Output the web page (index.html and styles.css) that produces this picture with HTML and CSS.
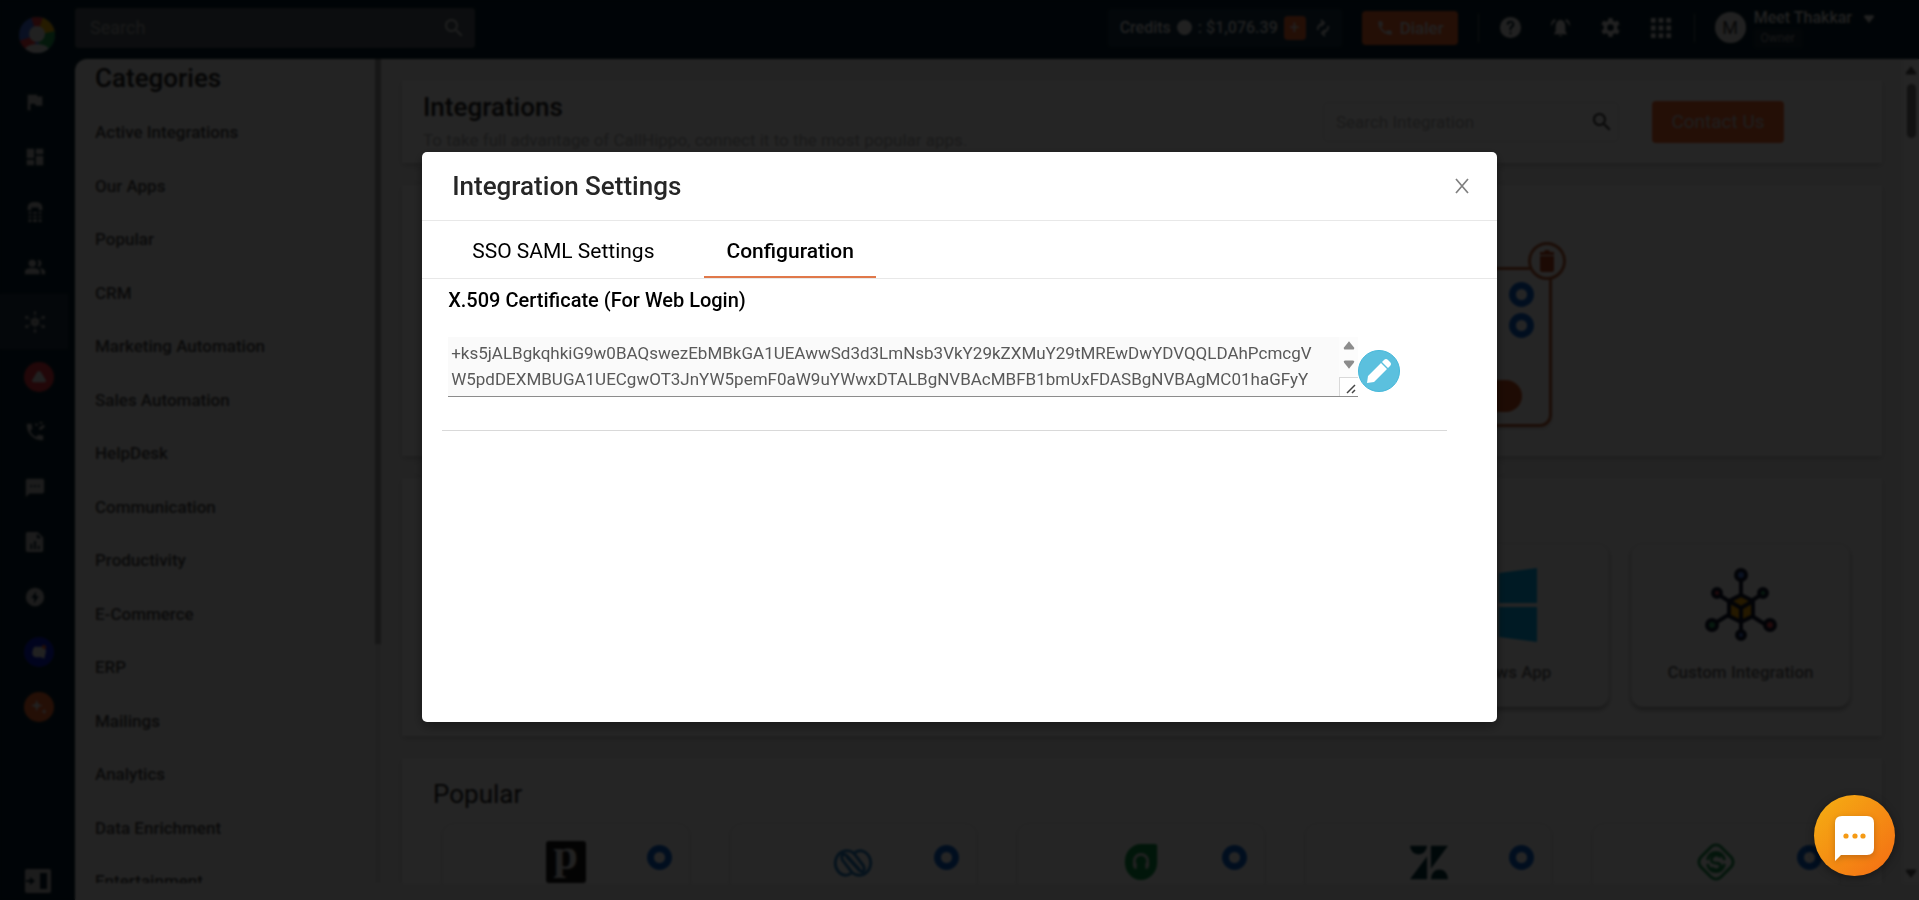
FILE: index.html
```html
<!DOCTYPE html>
<html lang="en">

<head>
    <meta charset="UTF-8">
    <meta name="viewport" content="width=device-width, initial-scale=1.0">
    <title>Integrations</title>
    <link rel="stylesheet" href="styles.css">
</head>

<body>
    <!-- shared icons -->
    <svg class="sprite" aria-hidden="true">
        <symbol id="i-search" viewBox="0 0 24 24"><path d="M15.5 14h-.8l-.3-.3A6.5 6.5 0 1 0 13.7 14.4l.3.3v.8l5 5 1.5-1.5zm-6 0a4.5 4.5 0 1 1 0-9 4.5 4.5 0 0 1 0 9z"/></symbol>
        <symbol id="i-phone" viewBox="0 0 24 24"><path d="M6.6 10.8a15 15 0 0 0 6.6 6.6l2.2-2.2c.3-.3.7-.4 1-.2 1.1.4 2.3.6 3.6.6.6 0 1 .4 1 1V20c0 .6-.4 1-1 1A17 17 0 0 1 3 4c0-.6.4-1 1-1h3.500c.6 0 1 .4 1 1 0 1.300.2 2.500.6 3.600.1.300 0 .7-.2 1z"/></symbol>
        <symbol id="i-up" viewBox="0 0 10 8"><path d="M5 0l4 5q1 2-1 2H2Q0 7 1 5z"/></symbol>
        <symbol id="i-down" viewBox="0 0 10 8"><path d="M5 8L1 3Q0 1 2 1h6q2 0 1 2z"/></symbol>
    </svg>

    <div class="app">
        <nav class="rail" aria-label="Main">
            <a class="logo" href="#" aria-label="Home">
                <svg width="36" height="36" viewBox="0 0 36 36">
                    <defs><clipPath id="round"><circle cx="18" cy="18" r="18"/></clipPath></defs>
                    <g clip-path="url(#round)">
                        <rect width="36" height="36" fill="#3f6be0"/>
                        <path d="M18 18L12 0h14z" fill="#e8353c"/>
                        <path d="M18 18L24 0h12v16z" fill="#f5b400"/>
                        <path d="M18 18l18-4v22H22z" fill="#1b9e4b"/>
                        <path d="M18 18L0 24v12h14z" fill="#e8353c"/>
                        <circle cx="18" cy="17" r="8" fill="#ddd"/>
                        <ellipse cx="18" cy="33" rx="12" ry="6" fill="#ddd"/>
                    </g>
                </svg>
            </a>
            <a class="rail-item" href="#" aria-label="Setup"><svg viewBox="0 0 24 24"><path d="M4 4h10l1 2h5v10h-7l-1-2H7v7H4z"/></svg></a>
            <a class="rail-item" href="#" aria-label="Dashboard"><svg viewBox="0 0 24 24"><path d="M3 3h8v10H3zM13 3h8v6h-8zM13 11h8v10h-8zM3 15h8v6H3z"/></svg></a>
            <a class="rail-item" href="#" aria-label="Numbers"><svg viewBox="0 0 24 24"><path d="M4 7q0-6 8-6t8 6v3h-4V7H8v3H4zM5 12h3v2H5zm5 0h4v2h-4zm6 0h3v2h-3zM5 16h3v2H5zm5 0h4v2h-4zm6 0h3v2h-3zM5 20h3v3H5zm5 0h4v3h-4zm6 0h3v3h-3z"/></svg></a>
            <a class="rail-item" href="#" aria-label="Users"><svg viewBox="0 0 24 24"><circle cx="9" cy="8" r="4"/><path d="M1 20v-3q0-4 8-4t8 4v3zM15 4a4 4 0 1 1 0 8q2-4 0-8zM17 13q6 1 6 4v3h-4v-3q0-2-2-4z"/></svg></a>
            <a class="rail-item active" href="#" aria-label="Integrations"><svg viewBox="0 0 24 24"><circle cx="12" cy="12" r="4.500"/><circle cx="12" cy="2" r="1.500"/><circle cx="12" cy="22" r="1.500"/><circle cx="3" cy="7" r="1.800"/><circle cx="21" cy="7" r="1.800"/><circle cx="3" cy="17" r="1.800"/><circle cx="21" cy="17" r="1.800"/><path d="M12 2v20M3 7l18 10M21 7L3 17" stroke="#888"/></svg></a>
            <a class="rail-item disc red" href="#" aria-label="Alerts"><svg viewBox="0 0 24 24"><path d="M12 4q2 0 3 2l6 10q1 3-2 3H5q-3 0-2-3L9 6q1-2 3-2z"/></svg></a>
            <a class="rail-item" href="#" aria-label="Power dialer"><svg viewBox="0 0 24 24"><use href="#i-phone"/><path d="M12 3h3v2h-3zM16 8l5-4 2 2-5 4zM17 1h3v2h-3z"/></svg></a>
            <a class="rail-item" href="#" aria-label="Messages"><svg viewBox="0 0 24 24"><path fill-rule="evenodd" d="M4 3h16q2 0 2 2v12q0 2-2 2H6l-4 4V5q0-2 2-2zm3 7v2h2v-2zm4 0v2h2v-2zm4 0v2h2v-2z"/></svg></a>
            <a class="rail-item" href="#" aria-label="Reports"><svg viewBox="0 0 24 24"><path fill-rule="evenodd" d="M4 1h11l6 6v14q0 2-2 2H4q-2 0-2-2V3q0-2 2-2zm10 2v5h5zM7 14v6h2v-6zm4-3v9h2v-9zm4 5v4h2v-4z"/></svg></a>
            <a class="rail-item" href="#" aria-label="Activity"><svg viewBox="0 0 24 24"><path fill-rule="evenodd" d="M12 2a10 10 0 1 0 0 20 10 10 0 0 0 0-20zm1 4v5h3l-5 8v-6H8z"/></svg></a>
            <a class="rail-item disc blue" href="#" aria-label="Inbox"><svg viewBox="0 0 24 24"><path d="M6 5h12q4 3 3 8-1 3-2 8l-4-2H8q-5-1-5-6 0-5 3-8z"/><circle cx="19" cy="5" r="3" fill="#f0642c"/></svg></a>
            <a class="rail-item disc orange" href="#" aria-label="AI"><svg viewBox="0 0 24 24"><path d="M9 2l2 6 6 2-6 2-2 6-2-6-6-2 6-2zM19 14l1 3 3 1-3 1-1 4-1-4-3-1 3-1z"/></svg></a>
            <button class="expand" type="button" aria-label="Expand menu">
                <svg width="26" height="24" viewBox="0 0 26 24"><path fill-rule="evenodd" d="M2 0h22q2 0 2 2v20q0 2-2 2H2q-2 0-2-2V2q0-2 2-2zm13 4v16h7V4zM5 8v3H1v2h4v3l5-4z"/></svg>
            </button>
        </nav>

        <div class="main">
            <header class="topbar">
                <div class="top-search">
                    <input type="text" placeholder="Search" aria-label="Search">
                    <svg width="24" height="24"><use href="#i-search"/></svg>
                </div>
                <div class="credits">
                    <span>Credits</span>
                    <span class="info"></span>
                    <span>: $1,076.39</span>
                    <button class="plus" type="button">+</button>
                    <svg width="14" height="18" viewBox="0 0 14 18" fill="none" stroke="#ccc" stroke-width="2"><path d="M2 11q-1-4 5-7M5 1l3 3-3 3M12 7q1 4-5 7M9 17l-3-3 3-3"/></svg>
                </div>
                <button class="dialer" type="button"><svg width="18" height="18"><use href="#i-phone"/></svg>Dialer</button>
                <span class="bar"></span>
                <div class="tools">
                    <svg viewBox="0 0 24 24"><path fill-rule="evenodd" d="M12 1a11 11 0 1 0 0 22 11 11 0 0 0 0-22zM8 9q0-4 4-4t4 4q0 2-2 3l-1 1v2h-2v-3l2-2q1-1 1-2-2-3-4 1zm3 8h2v2h-2z"/></svg>
                    <svg viewBox="0 0 24 24"><path d="M12 4q5 1 5 7v5l2 3H5l2-3v-5q0-6 5-7zM10 20h4q-2 3-4 0zM6 3l1 2q-3 2-4 5H2q0-5 4-7zM18 3l-1 2q3 2 4 5h1q0-5-4-7z"/></svg>
                    <svg viewBox="0 0 24 24"><path fill-rule="evenodd" d="M10 2h4l.5 3 2 1 3-1 2 3.500-2.500 2v3l2.500 2-2 3.500-3-1-2 1-.5 3h-4l-.5-3-2-1-3 1-2-3.500 2.500-2v-3l-2.500-2 2-3.500 3 1 2-1zM12 8.500a3.500 3.500 0 1 0 0 7 3.500 3.500 0 0 0 0-7z"/></svg>
                    <svg viewBox="0 0 24 24"><path d="M2 2h5v5H2zm8 0h5v5h-5zm8 0h5v5h-5zM2 10h5v5H2zm8 0h5v5h-5zm8 0h5v5h-5zM2 18h5v5H2zm8 0h5v5h-5zm8 0h5v5h-5z"/></svg>
                </div>
                <span class="bar"></span>
                <span class="avatar">M</span>
                <div class="user">
                    <div class="user-name">Meet Thakkar <svg width="12" height="9"><use href="#i-down"/></svg></div>
                    <span class="role">Owner</span>
                </div>
            </header>

            <div class="body">
                <aside class="categories">
                    <h2>Categories</h2>
                    <ul>
                        <li><a href="#">Active Integrations</a></li>
                        <li><a href="#">Our Apps</a></li>
                        <li><a href="#">Popular</a></li>
                        <li><a href="#">CRM</a></li>
                        <li><a href="#">Marketing Automation</a></li>
                        <li><a href="#">Sales Automation</a></li>
                        <li><a href="#">HelpDesk</a></li>
                        <li><a href="#">Communication</a></li>
                        <li><a href="#">Productivity</a></li>
                        <li><a href="#">E-Commerce</a></li>
                        <li><a href="#">ERP</a></li>
                        <li><a href="#">Mailings</a></li>
                        <li><a href="#">Analytics</a></li>
                        <li><a href="#">Data Enrichment</a></li>
                        <li><a href="#">Entertainment</a></li>
                    </ul>
                </aside>
                <div class="side-scroll"><div class="side-thumb"></div></div>

                <main class="content">
                    <section class="panel intro">
                        <div class="intro-text">
                            <h1>Integrations</h1>
                            <p>To take full advantage of CallHippo, connect it to the most popular apps.</p>
                        </div>
                        <div class="find">
                            <input type="text" placeholder="Search Integration" aria-label="Search Integration">
                            <svg width="24" height="24"><use href="#i-search"/></svg>
                        </div>
                        <button class="contact" type="button">Contact Us</button>
                    </section>

                    <section class="panel active-apps">
                        <div class="cards">
                            <div class="card connected">
                                <span class="dot"></span>
                                <span class="dot"></span>
                                <span class="pill"></span>
                                <button class="trash" type="button" aria-label="Remove">
                                    <svg width="16" height="22" viewBox="0 0 16 22"><path d="M1 2h4l1-2h4l1 2h4v3H1zM1 6h14v14q0 2-2 2H3q-2 0-2-2z"/></svg>
                                </button>
                            </div>
                        </div>
                    </section>

                    <section class="panel our-apps">
                        <div class="app-card windows">
                            <svg width="74" height="74" viewBox="0 0 74 74" fill="#00adef"><path d="M0 11l32-5v29H0zM36 5l38-5v35H36zM0 39h32v29L0 63zM36 39h38v35l-38-5z"/></svg>
                            <span>Windows App</span>
                        </div>
                        <div class="app-card">
                            <svg width="74" height="74" viewBox="0 0 74 74" stroke="#10172e" stroke-width="4">
                                <path d="M37 8v58M12 25l50 32M60 25L8 57" fill="none"/>
                                <path d="M37 27l12 6v15l-12 6-12-6V33z" fill="#f5a500"/>
                                <path d="M25 33l12 7 12-7M37 40v14" fill="none"/>
                                <circle cx="37" cy="7" r="5" fill="#4a7de8"/>
                                <circle cx="13" cy="25" r="4" fill="#e8454e"/>
                                <circle cx="59" cy="25" r="4" fill="#2fa866"/>
                                <circle cx="8" cy="57" r="5" fill="#2fa866"/>
                                <circle cx="66" cy="57" r="5" fill="#e8454e"/>
                                <circle cx="37" cy="67" r="4" fill="#4a7de8"/>
                            </svg>
                            <span>Custom Integration</span>
                        </div>
                    </section>

                    <section class="panel popular">
                        <h2>Popular</h2>
                        <div class="cards">
                            <div class="card">
                                <span class="brand pd">p</span>
                                <span class="dot"></span>
                            </div>
                            <div class="card">
                                <svg class="brand" viewBox="0 0 42 42" fill="none" stroke="#1b75bb" stroke-width="3"><path d="M19 33q-3 2-6 2a12 13 0 1 1 9-23l10 13q2 5-1 6-3 0-5-3L14 15"/><path d="M23 11q3-2 6-2a12 13 0 1 1-9 23L10 19q-2-5 1-6 3 0 5 3l12 13"/></svg>
                                <span class="dot"></span>
                            </div>
                            <div class="card">
                                <svg class="brand" viewBox="0 0 42 42"><path d="M21 2h15q2 0 2 2v18A17 19 0 1 1 21 2z" fill="#0b9444"/><path d="M14 26v-6a7 7 0 0 1 14 0v6M15 22v6M27 22v6" fill="none" stroke="#ddd" stroke-width="3"/></svg>
                                <span class="dot"></span>
                            </div>
                            <div class="card">
                                <svg class="brand" viewBox="0 0 42 42" fill="#03363d"><path d="M1 4h18q-1 9-9 9T1 4zM19 15v24H1zM23 4h18L23 28zM23 39q1-10 9-10t9 10z"/></svg>
                                <span class="dot"></span>
                            </div>
                            <div class="card">
                                <svg class="brand" viewBox="0 0 42 42" fill="none" stroke="#17904a" stroke-width="3"><path d="M21 3q3 0 5 2l11 11q4 5 0 10L26 37q-5 4-10 0L5 26q-4-5 0-10L16 5q2-2 5-2z"/><path d="M26 16q-5-5-9 0-3 5 3 6 6 0 6 4-3 6-10 1M12 19q2-8 9-8t9 8M12 23q2 8 9 8t9-8"/></svg>
                                <span class="dot"></span>
                            </div>
                        </div>
                    </section>
                </main>

                <div class="page-scroll">
                    <svg width="12" height="10"><use href="#i-up"/></svg>
                    <div class="page-thumb"></div>
                    <svg class="end" width="12" height="10"><use href="#i-down"/></svg>
                </div>
            </div>
        </div>
    </div>

    <div class="overlay">
        <div class="modal" role="dialog" aria-labelledby="modal-title">
            <div class="modal-header">
                <h2 id="modal-title">Integration Settings</h2>
                <button class="close" type="button" aria-label="Close">
                    <svg width="14" height="16" viewBox="0 0 14 16"><path d="M1 1l12 14M13 1L1 15" stroke="#808080" stroke-width="1.700" fill="none"/></svg>
                </button>
            </div>
            <div class="tabs">
                <button class="tab" type="button">SSO SAML Settings</button>
                <button class="tab selected" type="button">Configuration</button>
            </div>
            <div class="modal-body">
                <label for="cert">X.509 Certificate (For Web Login)</label>
                <div class="cert-row">
                    <div class="cert-box">
                        <textarea id="cert" rows="2" readonly>+ks5jALBgkqhkiG9w0BAQswezEbMBkGA1UEAwwSd3d3LmNsb3VkY29kZXMuY29tMREwDwYDVQQLDAhPcmcgV
W5pdDEXMBUGA1UECgwOT3JnYW5pemF0aW9uYWwxDTALBgNVBAcMBFB1bmUxFDASBgNVBAgMC01haGFyY</textarea>
                        <div class="cert-scroll">
                            <svg width="12" height="10"><use href="#i-up"/></svg>
                            <svg width="12" height="10"><use href="#i-down"/></svg>
                            <div class="grip"><svg width="10" height="10" viewBox="0 0 10 10"><path d="M1 9l8-8M6 9l3-3" stroke="#444" stroke-width="1.500"/></svg></div>
                        </div>
                    </div>
                    <button class="edit" type="button" aria-label="Edit">
                        <svg width="24" height="24" viewBox="0 0 24 24"><path d="M0 24l1-7L14 4l6 6L7 23zM15 3l2-2q2-2 4 0l2 2q2 2 0 4l-2 2z" fill="#fff"/></svg>
                    </button>
                </div>
            </div>
        </div>
    </div>

    <button class="chat" type="button" aria-label="Chat">
        <svg width="40" height="46" viewBox="0 0 40 46"><path d="M7 0h25q7 0 7 7v25q0 7-7 7H6l-6 6V7q0-7 7-7z" fill="#fff"/><g fill="#f59a14"><circle cx="11" cy="20" r="2.600"/><circle cx="20" cy="20" r="2.600"/><circle cx="28" cy="20" r="2.600"/></g></svg>
    </button>
</body>

</html>
```
FILE: styles.css
```css
* {
    box-sizing: border-box;
}

body {
    margin: 0;
    font-family: Roboto, Arial, sans-serif;
    font-size: 18px;
    color: #222;
    background: #06202e;
    overflow: hidden;
}

h1,
h2,
p,
ul {
    margin: 0;
    padding: 0;
}

button,
input,
textarea {
    font-family: inherit;
    border: none;
    padding: 0;
    margin: 0;
}

a {
    color: inherit;
    text-decoration: none;
}

.sprite {
    display: none;
}

.app {
    display: flex;
    height: 100vh;
}

/* left rail */
.rail {
    width: 75px;
    display: flex;
    flex-direction: column;
    flex-shrink: 0;
}

.logo {
    padding: 17px 0 0 19px;
    height: 74px;
}

.rail-item {
    display: flex;
    align-items: center;
    height: 55px;
    padding-left: 24px;
}

.rail-item svg {
    width: 22px;
    height: 22px;
    fill: #bbb;
}

.rail-item.active {
    width: 68px;
    background: #1e3244;
}

.rail-item.disc svg {
    width: 30px;
    height: 30px;
    padding: 6px;
    border-radius: 50%;
    fill: #ddd;
}

.red svg {
    background: #e0303c;
}

.blue svg {
    background: #0a1ec8;
}

.orange svg {
    background: #f0642c;
}

.expand {
    margin-top: auto;
    padding: 0 0 4px 25px;
    background: none;
    text-align: left;
    fill: #bbb;
}

.main {
    flex: 1;
    min-width: 0;
    display: flex;
    flex-direction: column;
}

/* top bar */
.topbar {
    display: flex;
    align-items: center;
    height: 59px;
    padding: 0 44px 4px 0;
    color: #ddd;
    fill: #ddd;
    flex-shrink: 0;
}

.top-search {
    display: flex;
    align-items: center;
    width: 400px;
    height: 40px;
    padding: 0 9px 0 15px;
    margin-right: auto;
    background: #505a64;
    border-radius: 4px;
    fill: #ccc;
}

.top-search input {
    flex: 1;
    background: none;
    font-size: 18px;
}

.top-search input::placeholder {
    color: #aaa;
}

.credits {
    display: flex;
    align-items: center;
    gap: 6px;
    height: 38px;
    padding: 0 12px;
    margin-right: 20px;
    background: #143246;
    border-radius: 4px;
    font-size: 16px;
    font-weight: 500;
}

.info {
    width: 15px;
    height: 15px;
    background: #ddd;
    border-radius: 50%;
}

.plus {
    width: 22px;
    height: 24px;
    margin-right: 4px;
    background: #f0642c;
    border-radius: 4px;
    color: #ddd;
    font-size: 18px;
}

.dialer {
    display: flex;
    align-items: center;
    justify-content: center;
    gap: 6px;
    width: 96px;
    height: 34px;
    margin-right: 20px;
    background: #f0642c;
    border-radius: 4px;
    color: #ddd;
    font-size: 17px;
    font-weight: 500;
    fill: #ddd;
}

.bar {
    width: 1px;
    height: 28px;
    background: #56646e;
}

.tools {
    display: flex;
    gap: 27px;
    padding: 0 22px 0 20px;
}

.tools svg {
    width: 23px;
    height: 23px;
}

.avatar {
    width: 31px;
    height: 31px;
    margin: 0 8px 0 20px;
    border-radius: 50%;
    background: #ddd;
    color: #333;
    font-size: 18px;
    line-height: 31px;
    text-align: center;
}

.user-name {
    font-size: 16px;
    line-height: 22px;
    font-weight: 500;
    white-space: nowrap;
}

.user-name svg {
    margin-left: 7px;
}

.role {
    display: block;
    width: 48px;
    background: #142a38;
    border-radius: 3px;
    font-size: 12px;
    line-height: 19px;
    text-align: center;
    color: #999;
}

/* page body */
.body {
    flex: 1;
    min-height: 0;
    display: flex;
    padding-bottom: 17px;
    background: #ececec;
    border-radius: 12px 0 0 0;
}

.categories {
    width: 300px;
    padding-left: 20px;
    overflow: hidden;
    flex-shrink: 0;
}

.categories h2 {
    margin-bottom: 9px;
    font-size: 26px;
    line-height: 38px;
    font-weight: 500;
}

.categories ul {
    list-style: none;
}

.categories li {
    padding: 14px 0;
    font-size: 17px;
    line-height: 1.5;
    font-weight: 500;
    color: #444;
}

.side-scroll {
    width: 6px;
    background: #dcdcdc;
}

.side-thumb {
    height: 71%;
    background: #999;
}

.content {
    flex: 1;
    min-width: 0;
    padding: 21px 21px 0;
    overflow: hidden;
}

.panel {
    margin-bottom: 22px;
    background: #f8f8f8;
    box-shadow: 0 2px 6px rgba(0, 0, 0, 0.2);
}

.intro {
    display: flex;
    align-items: center;
    height: 83px;
    padding: 0 98px 0 21px;
}

.intro-text {
    flex: 1;
}

.intro h1 {
    font-size: 26px;
    line-height: 36px;
    font-weight: 500;
}

.intro p {
    font-size: 17px;
    line-height: 30px;
    color: #aaa;
}

.find {
    display: flex;
    align-items: center;
    width: 296px;
    height: 40px;
    margin-right: 33px;
    padding: 0 4px 0 12px;
    border: 1px solid #e0e0e0;
    border-radius: 4px;
    fill: #333;
}

.find input {
    flex: 1;
    min-width: 0;
    background: none;
    font-size: 17px;
}

.find input::placeholder {
    color: #aaa;
}

.contact {
    width: 132px;
    height: 42px;
    background: #f0642c;
    border-radius: 4px;
    color: #ccc;
    font-size: 19px;
    font-weight: 400;
}

.cards {
    display: grid;
    grid-template-columns: repeat(5, 1fr);
    gap: 40px;
    padding: 0 42px 0 40px;
}

.card {
    position: relative;
    height: 160px;
    border: 1px solid #e4e4e4;
    border-radius: 12px;
    box-shadow: 0 2px 4px rgba(0, 0, 0, 0.15);
}

.active-apps {
    height: 271px;
    padding-top: 82px;
}

.connected {
    grid-column: 4;
    display: flex;
    flex-direction: column;
    align-items: flex-end;
    gap: 6px;
    padding: 12px 15px;
    border: 3px solid #b85c34;
}

.dot {
    width: 25px;
    height: 25px;
    border: 7px solid #0a62d0;
    border-radius: 50%;
}

.pill {
    width: 120px;
    height: 32px;
    margin-top: auto;
    margin-right: 12px;
    border-radius: 16px;
    background: #c84c1c;
}

/* sits over the corner of the card */
.trash {
    position: absolute;
    top: -28px;
    right: -17px;
    display: flex;
    align-items: center;
    justify-content: center;
    width: 38px;
    height: 38px;
    background: #f8f8f8;
    border: 3px solid #b85c34;
    border-radius: 50%;
    fill: #b8441c;
}

.our-apps {
    display: grid;
    grid-template-columns: repeat(6, 1fr);
    gap: 22px;
    height: 258px;
    padding: 65px 32px 29px 24px;
}

.app-card {
    display: flex;
    flex-direction: column;
    align-items: center;
    gap: 20px;
    padding-top: 24px;
    border: 1px solid #e4e4e4;
    border-radius: 12px;
    box-shadow: 0 3px 5px rgba(0, 0, 0, 0.35);
    font-size: 17px;
    font-weight: 500;
    color: #666;
}

.windows {
    grid-column: 5;
}

.popular {
    height: 260px;
    padding-top: 18px;
}

.popular h2 {
    padding: 0 31px;
    margin-bottom: 11px;
    font-size: 26px;
    line-height: 36px;
    font-weight: 400;
}

.popular .card {
    display: grid;
    grid-template-columns: 1fr 40px 1fr;
    justify-items: end;
    align-items: start;
    padding: 14px 17px;
}

.popular .dot {
    margin-top: 7px;
}

.brand {
    grid-column: 2;
    width: 40px;
    height: 42px;
    margin-top: 3px;
}

.pd {
    background: #1a1a1a;
    border-radius: 3px;
    color: #ddd;
    font-family: "Liberation Serif", serif;
    font-size: 44px;
    font-weight: bold;
    line-height: 28px;
    text-align: center;
}

.page-scroll {
    display: flex;
    flex-direction: column;
    align-items: center;
    gap: 8px;
    width: 16px;
    padding: 7px 0 5px;
    background: #f4f4f4;
    fill: #555;
}

.page-thumb {
    width: 9px;
    height: 54px;
    background: #777;
    border-radius: 5px;
}

.end {
    margin-top: auto;
}

/* dialog */
.overlay {
    position: fixed;
    inset: 0;
    background: rgba(0, 0, 0, 0.85);
    backdrop-filter: blur(1px);
}

.modal {
    width: 56%;
    min-height: 570px;
    margin: 152px auto 0;
    background: #fff;
    border-radius: 5px;
    box-shadow: 0 4px 12px rgba(0, 0, 0, 0.4);
}

.modal-header {
    display: flex;
    align-items: center;
    justify-content: space-between;
    height: 69px;
    padding: 0 28px 0 30px;
    border-bottom: 1px solid #e8e8e8;
}

.modal-header h2 {
    font-size: 26px;
    font-weight: 500;
    color: #262626;
}

.close {
    display: flex;
    background: none;
}

.tabs {
    display: flex;
    gap: 28px;
    height: 58px;
    padding-left: 28px;
    border-bottom: 1px solid #e8e8e8;
}

.tab {
    padding: 4px 22px 0;
    background: none;
    border-bottom: 2px solid transparent;
    font-size: 21px;
    color: #000;
}

.tab.selected {
    font-weight: 500;
    border-bottom-color: #e0784a;
}

.modal-body {
    margin: 0 50px 0 20px;
    padding: 8px 6px 33px;
    border-bottom: 1px solid #d9d9d9;
}

.modal-body label {
    display: block;
    margin-bottom: 24px;
    font-size: 20px;
    line-height: 26px;
    font-weight: 500;
    color: #000;
}

.cert-row {
    display: flex;
    align-items: center;
}

.cert-box {
    display: flex;
    flex: 1;
    max-width: 910px;
    background: #fafafa;
    border-bottom: 1px solid #8c8c8c;
}

.cert-box textarea {
    flex: 1;
    height: 59px;
    padding: 3px 0 3px 3px;
    background: none;
    color: #595959;
    font-size: 17px;
    line-height: 26px;
    white-space: pre;
    resize: none;
    overflow: hidden;
    outline: none;
}

.cert-scroll {
    display: flex;
    flex-direction: column;
    align-items: center;
    justify-content: space-between;
    width: 19px;
    padding-top: 4px;
    background: #fcfcfc;
    fill: #8c8c8c;
}

.grip {
    display: flex;
    align-items: flex-end;
    justify-content: flex-end;
    width: 19px;
    height: 19px;
    padding: 2px;
    background: #fff;
    border: 1px solid #d9d9d9;
    border-width: 1px 0 0 1px;
}

.edit {
    display: flex;
    align-items: center;
    justify-content: center;
    width: 42px;
    height: 42px;
    margin-top: 8px;
    border: 1px solid #46b8da;
    border-radius: 50%;
    background: #5bc0de;
}

.chat {
    position: fixed;
    right: 24px;
    bottom: 24px;
    display: flex;
    align-items: center;
    justify-content: center;
    width: 81px;
    height: 81px;
    padding-top: 6px;
    border-radius: 50%;
    background: linear-gradient(135deg, #f5b012, #f46c14);
    box-shadow: 0 2px 8px rgba(0, 0, 0, 0.4);
}

.chat svg {
    filter: drop-shadow(0 2px 3px rgba(0, 0, 0, 0.2));
}
```
